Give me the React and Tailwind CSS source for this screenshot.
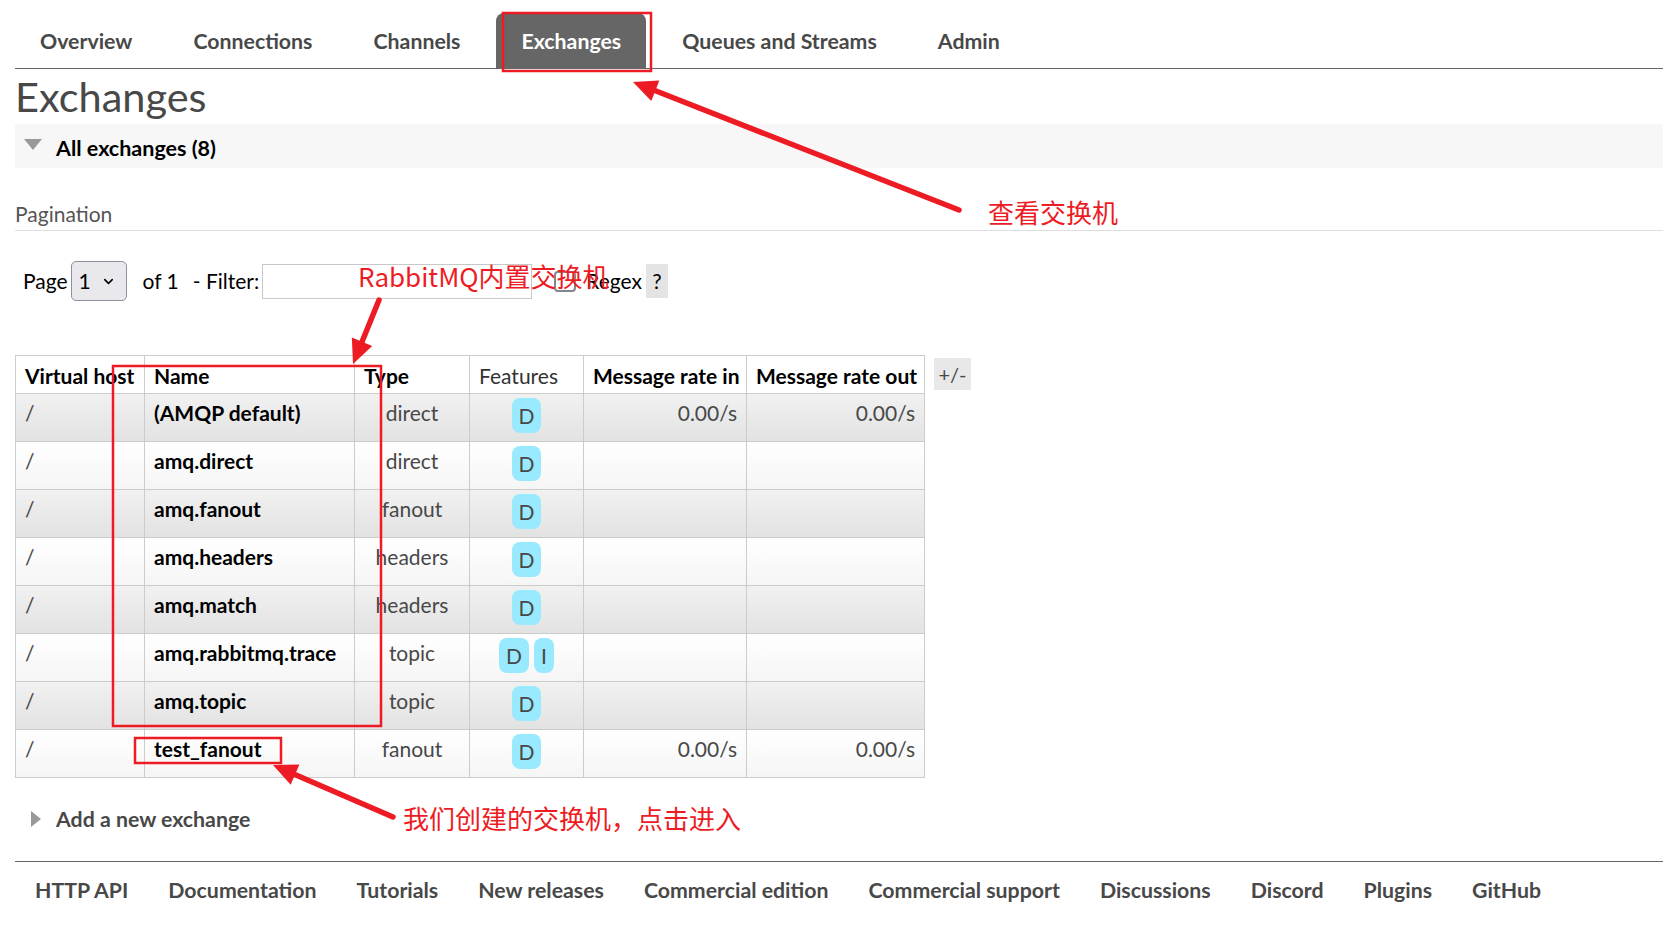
import { ChevronDown } from "lucide-react";

const tabs = ["Overview", "Connections", "Channels", "Exchanges", "Queues and Streams", "Admin"];

const footerLinks = [
  "HTTP API",
  "Documentation",
  "Tutorials",
  "New releases",
  "Commercial edition",
  "Commercial support",
  "Discussions",
  "Discord",
  "Plugins",
  "GitHub",
];

const exchanges = [
  { name: "(AMQP default)", type: "direct", features: ["D"], rateIn: "0.00/s", rateOut: "0.00/s" },
  { name: "amq.direct", type: "direct", features: ["D"] },
  { name: "amq.fanout", type: "fanout", features: ["D"] },
  { name: "amq.headers", type: "headers", features: ["D"] },
  { name: "amq.match", type: "headers", features: ["D"] },
  { name: "amq.rabbitmq.trace", type: "topic", features: ["D", "I"] },
  { name: "amq.topic", type: "topic", features: ["D"] },
  { name: "test_fanout", type: "fanout", features: ["D"], rateIn: "0.00/s", rateOut: "0.00/s" },
];

// red annotation arrow, head drawn from the direction of the shaft
const Arrow = ({ x1, y1, x2, y2 }) => {
  const dx = x2 - x1;
  const dy = y2 - y1;
  const len = Math.hypot(dx, dy);
  const ux = dx / len;
  const uy = dy / len;
  const bx = x2 - ux * 24;
  const by = y2 - uy * 24;
  const px = -uy * 11;
  const py = ux * 11;
  return (
    <g>
      <line
        x1={x1}
        y1={y1}
        x2={bx + ux * 4}
        y2={by + uy * 4}
        stroke="#ed1c24"
        strokeWidth="5.5"
        strokeLinecap="round"
      />
      <polygon points={`${x2},${y2} ${bx + px},${by + py} ${bx - px},${by - py}`} fill="#ed1c24" />
    </g>
  );
};

const App = () => {
  return (
    <div className="relative min-h-[929px] w-full overflow-hidden bg-white font-['Lato',sans-serif] text-[#484848]">
      <nav className="ml-[15px] flex gap-[11px] border-b border-[#666] pt-[13px]">
        {tabs.map((tab) => (
          <div
            key={tab}
            className={
              tab === "Exchanges"
                ? "flex h-[55px] items-center rounded-t-[8px] bg-[#666] px-[25px] pt-[3px] text-[21.3px] font-bold text-white"
                : "flex h-[55px] items-center px-[25px] pt-[3px] text-[21.3px] font-bold text-[#484848]"
            }
          >
            {tab}
          </div>
        ))}
      </nav>

      <div className="pl-[15px]">
        <h1 className="mt-[6px] h-[42px] text-[41.5px] font-normal leading-[42px] text-[#484848]">Exchanges</h1>

        <div className="mt-[7px] flex h-[44px] items-center bg-[#f7f7f7] pt-[4px]">
          <svg width="18" height="11" viewBox="0 0 18 11" className="ml-[9px] -mt-[8px]">
            <polygon points="0,0 18,0 9,11" fill="#999" />
          </svg>
          <span className="ml-[14px] text-[21.5px] font-bold text-black">All exchanges (8)</span>
        </div>

        <h3 className="mt-[34px] border-b border-[#dedede] pb-[4px] text-[21px] font-normal leading-[24px] text-[#555]">
          Pagination
        </h3>

        <div className="mt-[30px] flex h-[40px] items-center pl-[8px] text-[21px] text-black">
          <span>Page</span>
          <div className="ml-[3px] flex h-[40px] w-[56px] items-center justify-between rounded-[5px] border border-[#8f8f9d] bg-[#e9e9ed] pl-[7px] pr-[10px]">
            <span>1</span>
            <ChevronDown size={15} strokeWidth={2.5} />
          </div>
          <span className="ml-[16px]">of 1</span>
          <span className="ml-[14px]">- Filter:</span>
          <div className="ml-[3px] h-[35px] w-[270px] border border-[#c8c8c8] bg-white" />
          <div className="ml-[22px] h-[21px] w-[22px] rounded-[4px] border-[2.5px] border-[#85858f] bg-white" />
          <span className="ml-[10px]">Regex</span>
          <span className="ml-[4px] flex h-[34px] w-[22px] items-center justify-center bg-[#e4e4e4]">?</span>
        </div>

        <div className="mt-[54px] flex items-start">
          <table className="w-[909px] table-fixed border-collapse border border-[#ccc] text-[21px]">
            <colgroup>
              <col className="w-[129px]" />
              <col className="w-[210px]" />
              <col className="w-[115px]" />
              <col className="w-[114px]" />
              <col className="w-[163px]" />
              <col className="w-[178px]" />
            </colgroup>
            <thead>
              <tr className="bg-white">
                <th className="h-[38px] border border-[#ccc] px-[9px] pt-[2px] text-left font-bold text-black whitespace-nowrap">Virtual host</th>
                <th className="h-[38px] border border-[#ccc] px-[9px] pt-[2px] text-left font-bold text-black">Name</th>
                <th className="h-[38px] border border-[#ccc] px-[9px] pt-[2px] text-left font-bold text-black">Type</th>
                <th className="h-[38px] border border-[#ccc] px-[9px] pt-[2px] text-left font-normal text-[#333]">Features</th>
                <th className="h-[38px] border border-[#ccc] px-[9px] pt-[2px] text-left font-bold text-black whitespace-nowrap">Message rate in</th>
                <th className="h-[38px] border border-[#ccc] px-[9px] pt-[2px] text-left font-bold text-black whitespace-nowrap">Message rate out</th>
              </tr>
            </thead>
            <tbody>
              {exchanges.map((ex, i) => (
                <tr
                  key={ex.name}
                  className={
                    i % 2 === 0
                      ? "bg-gradient-to-b from-[#f1f1f1] to-[#e2e2e2]"
                      : "bg-gradient-to-b from-white to-[#f5f5f5]"
                  }
                >
                  <td className="h-[48px] border border-[#ccc] px-[9px] pt-[7px] align-top leading-[24px]">/</td>
                  <td className="h-[48px] border border-[#ccc] px-[9px] pt-[7px] align-top font-bold leading-[24px] text-black whitespace-nowrap">
                    {ex.name}
                  </td>
                  <td className="h-[48px] border border-[#ccc] px-[9px] pt-[7px] text-center align-top leading-[24px]">
                    {ex.type}
                  </td>
                  <td className="h-[48px] border border-[#ccc] px-[9px] pt-[4px] align-top">
                    <div className="flex justify-center gap-[5px]">
                      {ex.features.map((f) => (
                        <span
                          key={f}
                          className="flex h-[35px] items-center rounded-[8px] bg-[#99e9ff] px-[7px] leading-none text-[#484848]"
                        >
                          {f}
                        </span>
                      ))}
                    </div>
                  </td>
                  <td className="h-[48px] border border-[#ccc] px-[9px] pt-[7px] text-right align-top leading-[24px]">
                    {ex.rateIn}
                  </td>
                  <td className="h-[48px] border border-[#ccc] px-[9px] pt-[7px] text-right align-top leading-[24px]">
                    {ex.rateOut}
                  </td>
                </tr>
              ))}
            </tbody>
          </table>
          <span className="ml-[9px] mt-[3px] flex h-[32px] w-[37px] items-center justify-center bg-[#e8e8e8] text-[20px]">
            +/-
          </span>
        </div>

        <div className="mt-[29px] flex h-[24px] items-center">
          <svg width="10" height="16" viewBox="0 0 10 16" className="ml-[16px]">
            <polygon points="0,0 10,8 0,16" fill="#999" />
          </svg>
          <span className="ml-[15px] text-[21.3px] font-bold leading-[24px]">Add a new exchange</span>
        </div>
      </div>

      <footer className="ml-[15px] mt-[30px] flex border-t border-[#666] pt-[16px]">
        {footerLinks.map((link) => (
          <span key={link} className="px-[20px] text-[21.3px] font-bold leading-[24px] text-[#484848]">
            {link}
          </span>
        ))}
      </footer>

      <svg className="pointer-events-none absolute left-0 top-0" width="1663" height="929">
        <rect x="503" y="13" width="148" height="58" fill="none" stroke="#ed1c24" strokeWidth="2.5" />
        <rect x="113" y="366" width="268" height="360" fill="none" stroke="#ed1c24" strokeWidth="2.5" />
        <rect x="135" y="738" width="146" height="25" fill="none" stroke="#ed1c24" strokeWidth="2.5" />
        <Arrow x1={959} y1={210} x2={633} y2={82} />
        <Arrow x1={379} y1={300} x2={353} y2={364} />
        <Arrow x1={393} y1={817} x2={273} y2={765} />
      </svg>

      <div className="absolute left-[988px] top-[199px] font-['Noto_Sans_CJK_SC',sans-serif] text-[26px] leading-[26px] text-[#ed1c24]">
        查看交换机
      </div>
      <div className="absolute left-[358px] top-[263px] font-['Noto_Sans_CJK_SC',sans-serif] text-[26px] leading-[26px] text-[#ed1c24]">
        RabbitMQ内置交换机
      </div>
      <div className="absolute left-[403px] top-[805px] font-['Noto_Sans_CJK_SC',sans-serif] text-[26px] leading-[26px] text-[#ed1c24]">
        我们创建的交换机，点击进入
      </div>
    </div>
  );
};

export default App;
